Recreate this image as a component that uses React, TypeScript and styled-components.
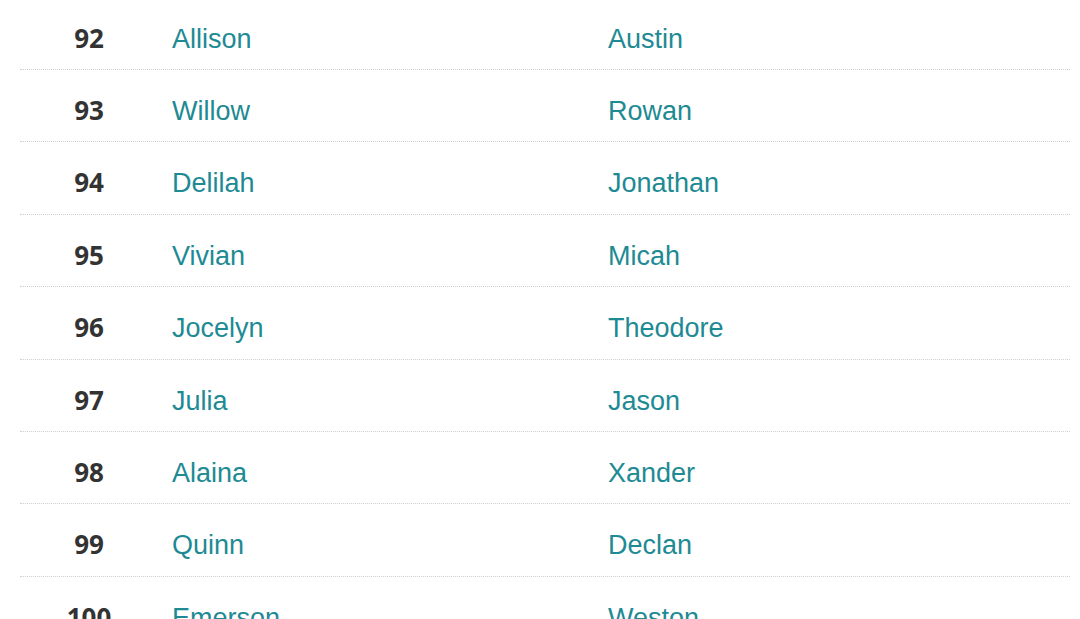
import styled, { createGlobalStyle } from "styled-components";

const GlobalStyle = createGlobalStyle`
  html, body {
    margin: 0;
    padding: 0;
    background: #fff;
    overflow: hidden;
  }
`;

const Table = styled.div`
  width: 1050px;
  margin: -2.4px 0 0 20px;
`;

const Row = styled.div`
  display: grid;
  grid-template-columns: 138px 436px 1fr;
  height: 72.4px;
  box-sizing: border-box;
  padding-top: 25px;
  border-bottom: 1px dotted #d0d0d0;
`;

const Rank = styled.div`
  font-family: "Open Sans", "Liberation Sans", sans-serif;
  font-weight: 700;
  font-size: 26px;
  line-height: 30px;
  color: #333;
  text-align: center;
`;

const Name = styled.a`
  font-family: "Liberation Sans", Arial, sans-serif;
  font-size: 27px;
  line-height: 30px;
  color: #1d8a94;
  text-decoration: none;
  padding: 1px 0 0 14px;
`;

const rows: [number, string, string][] = [
  [92, "Allison", "Austin"],
  [93, "Willow", "Rowan"],
  [94, "Delilah", "Jonathan"],
  [95, "Vivian", "Micah"],
  [96, "Jocelyn", "Theodore"],
  [97, "Julia", "Jason"],
  [98, "Alaina", "Xander"],
  [99, "Quinn", "Declan"],
  [100, "Emerson", "Weston"],
];

const App = () => {
  return (
    <>
      <GlobalStyle />
      <Table>
        {rows.map(([rank, girl, boy]) => (
          <Row key={rank}>
            <Rank>{rank}</Rank>
            <Name href="#">{girl}</Name>
            <Name href="#">{boy}</Name>
          </Row>
        ))}
      </Table>
    </>
  );
};

export default App;
